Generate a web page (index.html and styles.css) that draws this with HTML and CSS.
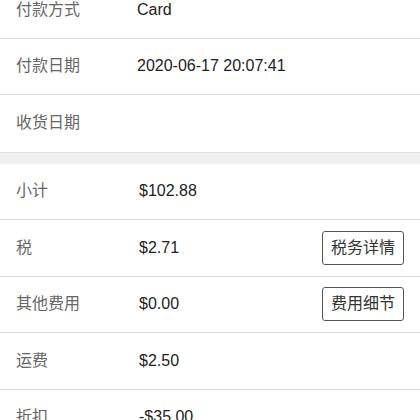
FILE: index.html
```html
<!DOCTYPE html>
<html lang="zh">
<head>
    <meta charset="UTF-8">
    <meta name="viewport" content="width=device-width, initial-scale=1.0">
    <title>订单详情</title>
    <link rel="stylesheet" href="styles.css">
</head>
<body>
    <div class="page">
        <div class="section section-info">
            <div class="row">
                <span class="label">付款方式</span>
                <span class="value">Card</span>
            </div>
            <div class="row">
                <span class="label">付款日期</span>
                <span class="value">2020-06-17 20:07:41</span>
            </div>
            <div class="row">
                <span class="label">收货日期</span>
                <span class="value"></span>
            </div>
        </div>

        <div class="gap"></div>

        <div class="section section-money">
            <div class="row">
                <span class="label">小计</span>
                <span class="value">$102.88</span>
            </div>
            <div class="row">
                <span class="label">税</span>
                <span class="value">$2.71</span>
                <button class="btn">税务详情</button>
            </div>
            <div class="row">
                <span class="label">其他费用</span>
                <span class="value">$0.00</span>
                <button class="btn">费用细节</button>
            </div>
            <div class="row">
                <span class="label">运费</span>
                <span class="value">$2.50</span>
            </div>
            <div class="row">
                <span class="label">折扣</span>
                <span class="value">-$35.00</span>
            </div>
        </div>
    </div>
</body>
</html>
```

FILE: styles.css
```css
html, body {
    margin: 0;
    padding: 0;
    background: white;
}
body {
    font-family: "Liberation Sans", "Noto Sans CJK SC", sans-serif;
    font-size: 16px;
    line-height: 20px;
    color: #222;
    overflow: hidden;
}
.page {
    margin-top: -18px;
}
.row {
    display: grid;
    grid-template-columns: 121px 1fr auto;
    align-items: center;
    height: 56.5px;
    box-sizing: border-box;
    padding: 0 16px;
    border-bottom: 1px solid #dcdcdc;
}
.section-info .row:last-child {
    border-bottom: none;
}
.section-money .row {
    grid-template-columns: 123px 1fr auto;
}
.label {
    color: #666;
}
.value {
    color: #222;
}
.gap {
    height: 12px;
    background: #efefef;
    border-top: 1px solid #e2e2e2;
    box-sizing: border-box;
}
.btn {
    height: 34px;
    padding: 0 8px;
    font-family: inherit;
    font-size: 16px;
    line-height: 20px;
    color: #333;
    background: white;
    border: 1px solid #555;
    border-radius: 3px;
}
```
